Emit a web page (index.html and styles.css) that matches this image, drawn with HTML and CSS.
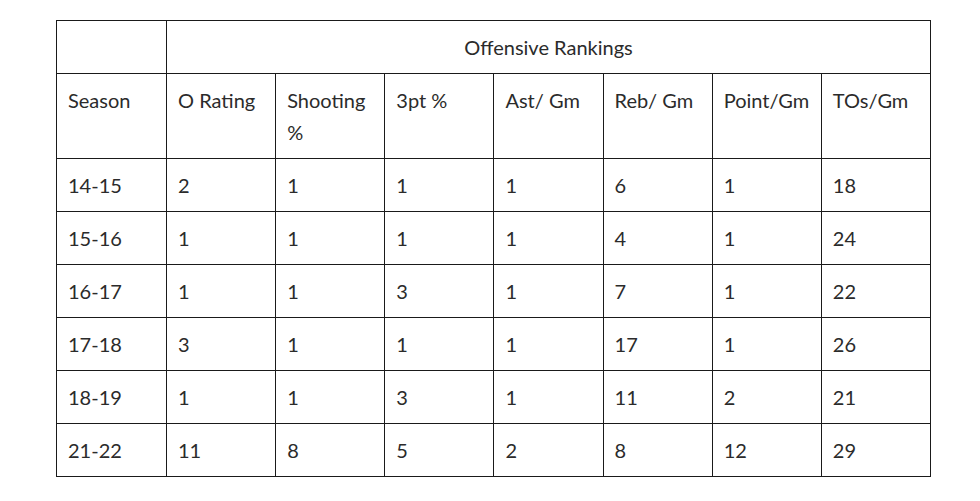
FILE: index.html
```html
<!DOCTYPE html>
<html lang="en">
<head>
<meta charset="utf-8">
<title>Offensive Rankings</title>
<link rel="stylesheet" href="styles.css">
</head>
<body>
<div class="page">
<table class="rankings">
  <colgroup>
    <col class="c1"><col><col><col><col><col><col><col>
  </colgroup>
  <thead>
    <tr>
      <th class="blank"></th>
      <th class="group" colspan="7">Offensive Rankings</th>
    </tr>
    <tr>
      <th>Season</th>
      <th>O Rating</th>
      <th>Shooting %</th>
      <th>3pt %</th>
      <th>Ast/ Gm</th>
      <th>Reb/ Gm</th>
      <th>Point/Gm</th>
      <th>TOs/Gm</th>
    </tr>
  </thead>
  <tbody>
    <tr><td>14-15</td><td>2</td><td>1</td><td>1</td><td>1</td><td>6</td><td>1</td><td>18</td></tr>
    <tr><td>15-16</td><td>1</td><td>1</td><td>1</td><td>1</td><td>4</td><td>1</td><td>24</td></tr>
    <tr><td>16-17</td><td>1</td><td>1</td><td>3</td><td>1</td><td>7</td><td>1</td><td>22</td></tr>
    <tr><td>17-18</td><td>3</td><td>1</td><td>1</td><td>1</td><td>17</td><td>1</td><td>26</td></tr>
    <tr><td>18-19</td><td>1</td><td>1</td><td>3</td><td>1</td><td>11</td><td>2</td><td>21</td></tr>
    <tr><td>21-22</td><td>11</td><td>8</td><td>5</td><td>2</td><td>8</td><td>12</td><td>29</td></tr>
  </tbody>
</table>
</div>
</body>
</html>
```
FILE: styles.css
```css
html, body {
  margin: 0;
  padding: 0;
  background: #ffffff;
}

.page {
  padding: 20px 0 0 56px;
}

.rankings {
  border-collapse: collapse;
  table-layout: fixed;
  width: 875px;
  font-family: Lato, "Liberation Sans", sans-serif;
  font-size: 20px;
  line-height: 32px;
  color: #2b2b2b;
}

.rankings th,
.rankings td {
  border: 1px solid #1a1a1a;
  padding: 10px 11px;
  text-align: left;
  vertical-align: top;
  font-weight: normal;
}

.rankings .c1 {
  width: 110px;
}

.rankings .group {
  text-align: center;
}
```
